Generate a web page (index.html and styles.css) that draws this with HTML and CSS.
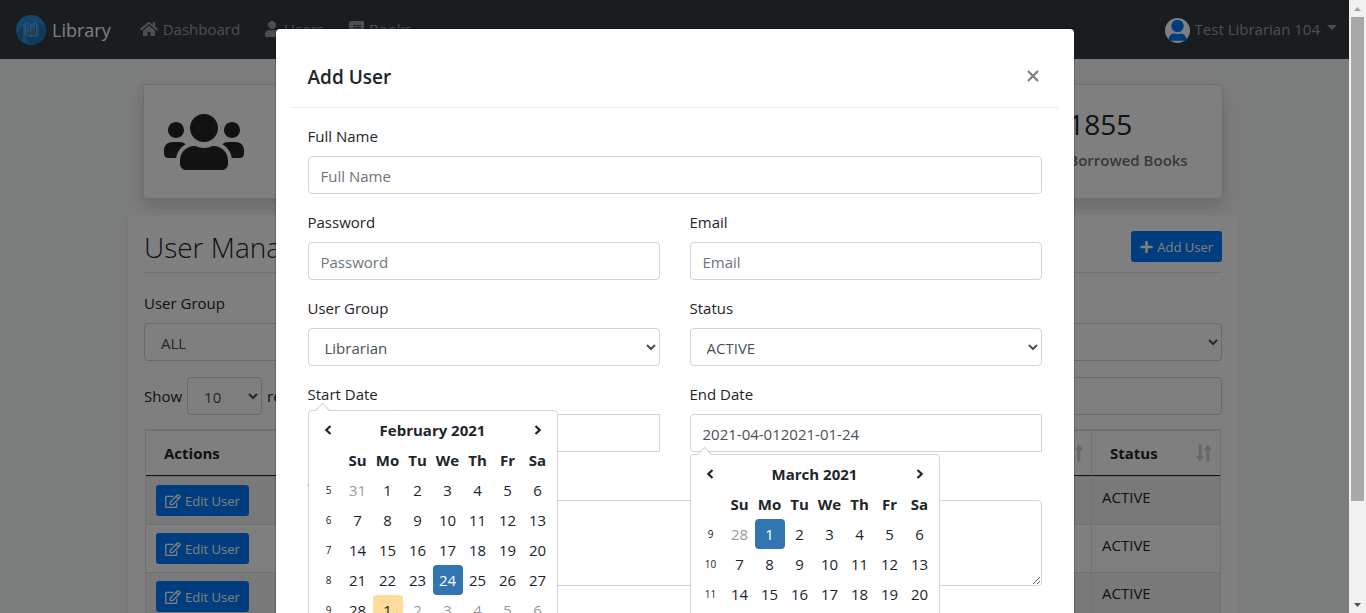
FILE: index.html
```html
<!DOCTYPE html>
<html lang="en">
<head>
<meta charset="utf-8">
<title>Library</title>
<link rel="stylesheet" href="styles.css">
</head>
<body>
<svg class="sprite" aria-hidden="true">
  <symbol id="i-home" viewBox="0 0 576 512"><path d="M280.37 148.26L96 300.11V464a16 16 0 0 0 16 16l112.06-.29a16 16 0 0 0 15.92-16V368a16 16 0 0 1 16-16h64a16 16 0 0 1 16 16v95.64a16 16 0 0 0 16 16.05L464 480a16 16 0 0 0 16-16V300L295.67 148.26a12.19 12.19 0 0 0-15.3 0zM571.6 251.47L488 182.56V44.05a12 12 0 0 0-12-12h-56a12 12 0 0 0-12 12v72.61L318.47 43a48 48 0 0 0-61 0L4.34 251.47a12 12 0 0 0-1.6 16.9l25.5 31A12 12 0 0 0 45.15 301l235.22-193.74a12.19 12.19 0 0 1 15.3 0L530.9 301a12 12 0 0 0 16.9-1.6l25.5-31a12 12 0 0 0-1.7-16.93z"/></symbol>
  <symbol id="i-user" viewBox="0 0 448 512"><path d="M224 256c70.7 0 128-57.3 128-128S294.7 0 224 0 96 57.3 96 128s57.3 128 128 128zm89.6 32h-16.7c-22.2 10.2-46.9 16-72.9 16s-50.6-5.8-72.9-16h-16.7C60.2 288 0 348.2 0 422.4V464c0 26.5 21.5 48 48 48h352c26.5 0 48-21.5 48-48v-41.6c0-74.2-60.2-134.4-134.4-134.4z"/></symbol>
  <symbol id="i-users" viewBox="0 0 640 512"><path d="M96 224c35.3 0 64-28.7 64-64s-28.7-64-64-64-64 28.7-64 64 28.7 64 64 64zm448 0c35.3 0 64-28.7 64-64s-28.7-64-64-64-64 28.7-64 64 28.7 64 64 64zm32 32h-64c-17.6 0-33.5 7.1-45.1 18.6 40.3 22.1 68.9 62 75.1 109.4h66c17.7 0 32-14.3 32-32v-32c0-35.3-28.7-64-64-64zm-256 0c61.9 0 112-50.1 112-112S381.9 32 320 32 208 82.1 208 144s50.1 112 112 112zm76.8 32h-8.3c-20.8 10-43.9 16-68.5 16s-47.6-6-68.5-16h-8.3C179.6 288 128 339.6 128 403.2V432c0 26.5 21.5 48 48 48h288c26.5 0 48-21.5 48-48v-28.8c0-63.6-51.6-115.2-115.2-115.2zm-223.7-13.4C161.5 263.1 145.6 256 128 256H64c-35.3 0-64 28.7-64 64v32c0 17.7 14.3 32 32 32h65.9c6.3-47.4 34.9-87.3 75.2-109.4z"/></symbol>
  <symbol id="i-book" viewBox="0 0 15 16"><path fill-rule="evenodd" d="M3 0h11a1 1 0 0 1 1 1v11a1 1 0 0 1-1 1v2h1v1H3a3 3 0 0 1-3-3V3a3 3 0 0 1 3-3zm1 4v1h8V4zm0 2v1h8V6zm-1 7v2h9v-2z"/></symbol>
  <symbol id="i-edit" viewBox="0 0 576 512"><path d="M402.3 344.9l32-32c5-5 13.7-1.5 13.7 5.7V464c0 26.5-21.5 48-48 48H48c-26.5 0-48-21.5-48-48V112c0-26.5 21.5-48 48-48h273.5c7.1 0 10.7 8.6 5.7 13.7l-32 32c-1.5 1.5-3.5 2.3-5.7 2.3H48v352h352V350.5c0-2.1.8-4.1 2.3-5.6zm156.6-201.8L296.3 405.7l-90.4 10c-26.2 2.9-48.5-19.2-45.6-45.6l10-90.4L432.9 17.1c22.9-22.9 59.9-22.9 82.7 0l43.2 43.2c22.9 22.9 22.9 60 .1 82.8zM460.1 174L402 115.9 216.2 301.8l-7.3 65.3 65.3-7.3L460.1 174zm64.8-79.7l-43.2-43.2c-4.1-4.1-10.8-4.1-14.8 0L436 82l58.1 58.1 30.9-30.9c4-4.2 4-10.8-.1-14.9z"/></symbol>
  <symbol id="i-plus" viewBox="0 0 448 512"><path d="M416 208H272V64c0-17.67-14.33-32-32-32h-32c-17.67 0-32 14.33-32 32v144H32c-17.67 0-32 14.33-32 32v32c0 17.67 14.33 32 32 32h144v144c0 17.67 14.33 32 32 32h32c17.67 0 32-14.33 32-32V304h144c17.67 0 32-14.33 32-32v-32c0-17.67-14.33-32-32-32z"/></symbol>
  <symbol id="i-sort" viewBox="0 0 16 18"><path d="M2.700 0.500h3v11.500h2.300L4.200 17.500 0 12h2.700zM10.300 17.500h3V6H16L11.800 0.500 8 6h2.300z"/></symbol>
  <symbol id="i-prev" viewBox="0 0 8 10"><path d="M6.500 1L2.300 5l4.200 4" fill="none" stroke="currentColor" stroke-width="2.200"/></symbol>
  <symbol id="i-next" viewBox="0 0 8 10"><path d="M1.500 1l4.200 4-4.200 4" fill="none" stroke="currentColor" stroke-width="2.200"/></symbol>
</svg>

<div class="app">
  <header class="navbar">
    <a class="brand" href="#">
      <svg class="logo" viewBox="0 0 30 30">
        <circle cx="15" cy="15" r="15" fill="#2491e0"/>
        <path d="M8 21l6.500 8.990A15 15 0 0 0 29 10L22 8z" fill="#1c79be"/>
        <path d="M0.500 18L8 9v12l-3 5.200A15 15 0 0 1 0.500 18z" fill="#1c79be"/>
        <g fill="none" stroke="#8fa9be" stroke-width=".8">
          <path d="M8 9v12h14V9M15 10.500V22M9.500 8.500c2 0 4 .3 5.500 2 1.500-1.700 3.500-2 5.500-2v11c-2 0-4 .3-5.500 2-1.500-1.700-3.500-2-5.500-2z"/>
          <path d="M11 11.500l2.500.8M11 14l2.500.8M11 16.500l2.500.8M19 11.500l-2.500.8M19 14l-2.500.8M19 16.500l-2.500.8"/>
        </g>
      </svg>
      Library
    </a>
    <nav class="links">
      <a href="#"><svg class="ic-home"><use href="#i-home"/></svg>Dashboard</a>
      <a href="#"><svg class="ic-user"><use href="#i-user"/></svg>Users</a>
      <a href="#"><svg class="ic-book"><use href="#i-book"/></svg>Books</a>
    </nav>
    <button class="account" type="button">
      <svg class="avatar" viewBox="0 0 25 25">
        <circle cx="12.500" cy="12.500" r="12.500" fill="#fff"/>
        <circle cx="12.500" cy="8" r="6.200" fill="#007bff"/>
        <path d="M3.500 21.500c.6-4 3-6 6-6 2 .8 4 .8 6 0 3 0 5.400 2 6 6l-1.500 1.300h-15z" fill="#007bff"/>
      </svg>
      Test Librarian 104
      <span class="caret"></span>
    </button>
  </header>

  <main class="container">
    <section class="stats">
      <article class="card"><svg class="ic-stat"><use href="#i-users"/></svg></article>
      <article class="card"></article>
      <article class="card">
        <svg class="ic-stat"><use href="#i-book"/></svg>
        <div><p class="count">1855</p><p class="caption">Borrowed Books</p></div>
      </article>
    </section>

    <section class="panel">
      <div class="panel-head">
        <h1>User Management</h1>
        <button class="btn" type="button"><svg class="ic-plus"><use href="#i-plus"/></svg>Add User</button>
      </div>
      <div class="field">
        <label for="filter-group">User Group</label>
        <select id="filter-group" class="control"><option>ALL</option></select>
      </div>
      <div class="table-tools">
        <label class="show">Show <select class="control"><option>10</option></select> records</label>
        <input class="control search" type="search" aria-label="Search">
      </div>
      <table class="users">
        <thead>
          <tr><th>Actions</th><th><div class="sort"><svg><use href="#i-sort"/></svg></div></th><th><div class="sort">Status<svg><use href="#i-sort"/></svg></div></th></tr>
        </thead>
        <tbody>
          <tr><td><button class="btn" type="button"><svg class="ic-edit"><use href="#i-edit"/></svg>Edit User</button></td><td></td><td>ACTIVE</td></tr>
          <tr><td><button class="btn" type="button"><svg class="ic-edit"><use href="#i-edit"/></svg>Edit User</button></td><td></td><td>ACTIVE</td></tr>
          <tr><td><button class="btn" type="button"><svg class="ic-edit"><use href="#i-edit"/></svg>Edit User</button></td><td></td><td>ACTIVE</td></tr>
        </tbody>
      </table>
    </section>
  </main>
</div>

<div class="overlay">
  <div class="viewport">
    <form class="modal" role="dialog" aria-labelledby="modal-title">
      <header class="modal-head">
        <h2 id="modal-title">Add User</h2>
        <button class="close" type="button" aria-label="Close"><svg viewBox="0 0 12 12"><path d="M1 1l10 10M11 1L1 11"/></svg></button>
      </header>
      <div class="modal-body">
        <div class="field wide"><label for="name">Full Name</label><input id="name" class="control" placeholder="Full Name"></div>
        <div class="field"><label for="password">Password</label><input id="password" class="control" type="password" placeholder="Password"></div>
        <div class="field"><label for="email">Email</label><input id="email" class="control" type="email" placeholder="Email"></div>
        <div class="field"><label for="group">User Group</label><select id="group" class="control"><option>Librarian</option></select></div>
        <div class="field"><label for="status">Status</label><select id="status" class="control"><option>ACTIVE</option></select></div>
        <div class="field">
          <label for="start">Start Date</label><input id="start" class="control date">
          <div class="picker over">
            <table>
              <thead>
                <tr><th><button type="button" aria-label="Previous month"><svg><use href="#i-prev"/></svg></button></th><th colspan="6">February 2021</th><th><button type="button" aria-label="Next month"><svg><use href="#i-next"/></svg></button></th></tr>
                <tr><th></th><th>Su</th><th>Mo</th><th>Tu</th><th>We</th><th>Th</th><th>Fr</th><th>Sa</th></tr>
              </thead>
              <tbody>
                <tr><td class="week">5</td><td class="out">31</td><td>1</td><td>2</td><td>3</td><td>4</td><td>5</td><td>6</td></tr>
                <tr><td class="week">6</td><td>7</td><td>8</td><td>9</td><td>10</td><td>11</td><td>12</td><td>13</td></tr>
                <tr><td class="week">7</td><td>14</td><td>15</td><td>16</td><td>17</td><td>18</td><td>19</td><td>20</td></tr>
                <tr><td class="week">8</td><td>21</td><td>22</td><td>23</td><td class="active">24</td><td>25</td><td>26</td><td>27</td></tr>
                <tr><td class="week">9</td><td>28</td><td class="today">1</td><td class="out">2</td><td class="out">3</td><td class="out">4</td><td class="out">5</td><td class="out">6</td></tr>
              </tbody>
            </table>
          </div>
        </div>
        <div class="field">
          <label for="end">End Date</label><input id="end" class="control date" value="2021-04-012021-01-24">
          <div class="picker below">
            <table>
              <thead>
                <tr><th><button type="button" aria-label="Previous month"><svg><use href="#i-prev"/></svg></button></th><th colspan="6">March 2021</th><th><button type="button" aria-label="Next month"><svg><use href="#i-next"/></svg></button></th></tr>
                <tr><th></th><th>Su</th><th>Mo</th><th>Tu</th><th>We</th><th>Th</th><th>Fr</th><th>Sa</th></tr>
              </thead>
              <tbody>
                <tr><td class="week">9</td><td class="out">28</td><td class="active">1</td><td>2</td><td>3</td><td>4</td><td>5</td><td>6</td></tr>
                <tr><td class="week">10</td><td>7</td><td>8</td><td>9</td><td>10</td><td>11</td><td>12</td><td>13</td></tr>
                <tr><td class="week">11</td><td>14</td><td>15</td><td>16</td><td>17</td><td>18</td><td>19</td><td>20</td></tr>
                <tr><td class="week">12</td><td>21</td><td>22</td><td>23</td><td>24</td><td>25</td><td>26</td><td>27</td></tr>
              </tbody>
            </table>
          </div>
        </div>
        <div class="field wide"><label for="address">Address</label><textarea id="address" class="control" rows="3"></textarea></div>
      </div>
    </form>
  </div>
  <div class="scrollbar" aria-hidden="true">
    <svg class="up" viewBox="0 0 17 17"><path d="M5 11h7L8.500 7z"/></svg>
    <div class="track"><div class="thumb"></div></div>
    <svg class="down" viewBox="0 0 17 17"><path d="M5 7h7l-3.500 4z"/></svg>
  </div>
</div>
</body>
</html>
```
FILE: styles.css
```css
* { box-sizing: border-box; }

body {
  margin: 0;
  height: 100vh;
  overflow: hidden;
  position: relative;
  background: #f7faf8;
  color: #212529;
  font: 15px/24px "Open Sans", "Noto Sans", sans-serif;
}

h1, h2, p { margin: 0; }
button, input, select, textarea { font: inherit; }
svg { display: block; flex: none; fill: currentColor; }
.sprite { position: absolute; width: 0; height: 0; }

/* Navigation */
.navbar {
  display: flex;
  align-items: center;
  height: 59px;
  padding: 0 29px 0 16px;
  background: #343a40;
}
.navbar a { text-decoration: none; }
.brand {
  display: flex;
  align-items: center;
  gap: 6px;
  color: #fff;
  font-size: 18px;
}
.logo { width: 30px; height: 30px; }
.links {
  display: flex;
  gap: 25px;
  margin-left: 29px;
  padding-bottom: 1px;
}
.links a, .account {
  display: flex;
  align-items: center;
  gap: 5px;
  color: #9a9da0;
}
.account {
  margin-left: auto;
  padding: 0 0 2px;
  border: 0;
  background: none;
}
.ic-home { width: 18px; height: 16px; }
.ic-user { width: 14px; height: 16px; }
.ic-book { width: 15px; height: 16px; }
.avatar { width: 25px; height: 25px; margin-top: 3px; }
.caret {
  margin: 0 0 2px 2px;
  border: 5px solid transparent;
  border-top-color: currentColor;
  border-bottom: 0;
}

/* Page content */
.container {
  max-width: 1110px;
  margin: 25px auto 0;
}
.stats {
  display: grid;
  grid-template-columns: repeat(3, 1fr);
  gap: 32px;
  padding: 0 15px;
}
.card {
  display: grid;
  grid-template-columns: 163px 1fr;
  align-items: center;
  height: 115px;
  padding: 0 20px;
  border: 1px solid #dfdfdf;
  border-radius: 4px;
  background: #fff;
  box-shadow: 0 8px 16px rgba(0, 0, 0, .15);
}
.ic-stat { width: 80px; height: 64px; }
.count { font-size: 28px; line-height: 36px; font-weight: 500; }
.caption { line-height: 36px; color: #6c757d; font-weight: 600; }

.panel {
  margin-top: 16px;
  padding: 16px;
  border-radius: 4px;
  background: #fff;
  box-shadow: 0 2px 4px rgba(0, 0, 0, .08);
}
.panel-head {
  display: flex;
  justify-content: space-between;
  align-items: flex-start;
  height: 42px;
  margin-bottom: 18px;
  border-bottom: 1px solid #e5e5e5;
}
.panel-head h1 { font-size: 28px; line-height: 32px; font-weight: 300; }
.btn {
  display: flex;
  align-items: center;
  gap: 4px;
  height: 31px;
  padding: 0 9px;
  border: 0;
  border-radius: 3px;
  background: #007bff;
  color: #fff;
  font-size: 13px;
}
.ic-plus { width: 13px; height: 14px; }
.ic-edit { width: 16px; height: 14px; }

.field {
  display: flex;
  flex-direction: column;
  gap: 8px;
  position: relative;
}
.control {
  width: 100%;
  height: 38px;
  padding: 7px 12px 5px;
  border: 1px solid #ced4da;
  border-radius: 4px;
  background: #fff;
  color: #495057;
  outline: 0;
}
.control::placeholder { color: #6c757d; opacity: 1; }
select.control { padding-right: 4px; }
textarea.control { display: block; height: 86px; resize: vertical; }
.date { border-radius: 4px 0 0 4px; }

.table-tools {
  display: flex;
  justify-content: space-between;
  margin: 16px 0 14px;
}
.show { display: flex; align-items: center; gap: 5px; }
.show .control { width: 75px; }
.search { width: 300px; }

.users {
  width: calc(100% - 2px);
  margin: 0 1px;
  border: 1px solid #dee2e6;
  border-spacing: 0;
  table-layout: fixed;
}
.users th, .users td {
  padding: 8px 10px;
  border-top: 1px solid #dee2e6;
  border-left: 1px solid #dee2e6;
  text-align: left;
  vertical-align: top;
}
.users th {
  height: 45px;
  padding: 10px 8px 10px 18px;
  border-bottom: 1px solid #212529;
  font-weight: 700;
}
.users th:first-child, .users td:first-child { border-left: 0; }
.users th:last-child { width: 129px; }
.users tbody tr:nth-child(odd) { background: #f2f2f2; }
.sort { display: flex; align-items: center; min-height: 24px; }
.sort svg { width: 16px; height: 18px; margin-left: auto; color: #cfcfcf; }

/* Modal layer */
.overlay {
  position: absolute;
  inset: 0;
  display: flex;
  background: rgba(0, 0, 0, .5);
}
.viewport { flex: 1; min-width: 0; overflow: hidden; }
.modal {
  max-width: 800px;
  margin: 28px auto;
  padding: 16px;
  border: 1px solid rgba(0, 0, 0, .2);
  border-radius: 5px;
  background: #fff;
  background-clip: padding-box;
}
.modal-head {
  display: flex;
  justify-content: space-between;
  align-items: center;
  padding: 16px;
  border-bottom: 1px solid #e9ecef;
}
.modal-head h2 { padding-top: 2px; font-size: 19px; line-height: 28px; font-weight: 600; }
.close {
  padding: 4px;
  border: 0;
  margin-right: -1px;
  background: none;
  color: #7f7f7f;
}
.close svg { width: 12px; height: 12px; fill: none; stroke: currentColor; stroke-width: 2.2; }
.modal-body {
  display: grid;
  grid-template-columns: 1fr 1fr;
  gap: 16px 30px;
  padding: 16px;
}
.wide { grid-column: 1 / -1; }

/* Calendar popup, opened over its field */
.picker {
  position: absolute;
  left: 0;
  z-index: 2;
  padding: 4px;
  border: 1px solid #d3d3d3;
  border-radius: 4px;
  background: #fff;
}
.picker.over { top: 28px; }
.picker.below { top: 72px; }
.picker::before {
  content: "";
  position: absolute;
  top: -6px;
  left: 8px;
  width: 10px;
  height: 10px;
  border: 1px solid #d3d3d3;
  border-right: 0;
  border-bottom: 0;
  background: linear-gradient(135deg, #fff 50%, transparent 50%);
  transform: rotate(45deg);
}
.picker table { border-spacing: 0; table-layout: fixed; width: 240px; }
.picker th, .picker td {
  height: 30px;
  padding: 0;
  border-radius: 4px;
  text-align: center;
  line-height: 20px;
}
.picker th { font-weight: 700; }
.picker button {
  display: flex;
  align-items: center;
  justify-content: center;
  width: 100%;
  height: 30px;
  padding: 0;
  border: 0;
  background: none;
  color: #212529;
}
.picker button svg { width: 8px; height: 10px; }
.picker .week { padding-left: 2px; font-size: 10px; }
.picker .out { color: #999; }
.picker .active { background: #3276b1; color: #fff; }
.picker .today { background: #ffdb99; }

.scrollbar {
  display: flex;
  flex-direction: column;
  width: 17px;
  background: #f1f1f1;
}
.scrollbar svg { width: 17px; height: 17px; }
.up { color: #a3a3a3; }
.down { color: #505050; }
.track { flex: 1; padding: 0 2px; }
.thumb { height: 83.6%; background: #a8a8a8; }
```
